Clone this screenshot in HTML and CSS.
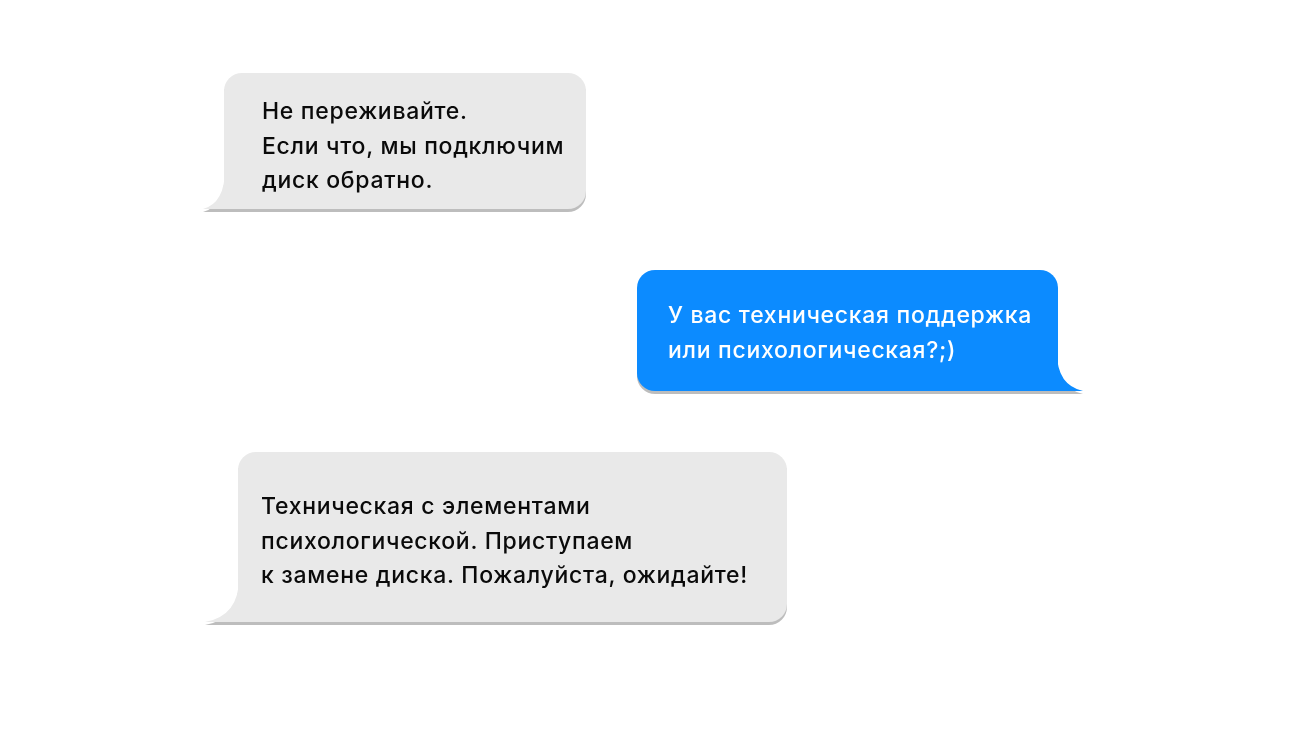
FILE: index.html
```html
<!DOCTYPE html>
<html lang="ru">
<head>
<meta charset="utf-8">
<title>Чат</title>
<link rel="stylesheet" href="styles.css">
</head>
<body>
<main class="chat">
  <div class="bubble in b1">
    <svg class="tail tail-left" viewBox="0 0 22 40" preserveAspectRatio="none"><path d="M22 0 Q22 34 0 40 L22 40 Z"/></svg>
    <p>Не переживайте.<br>Если что, мы подключим<br>диск обратно.</p>
  </div>
  <div class="bubble out b2">
    <svg class="tail tail-right" viewBox="0 0 26 38" preserveAspectRatio="none"><path d="M0 0 Q0 32 26 38 L0 38 Z"/></svg>
    <p>У вас техническая поддержка<br>или психологическая?;)</p>
  </div>
  <div class="bubble in b3">
    <svg class="tail tail-left3" viewBox="0 0 34 44" preserveAspectRatio="none"><path d="M34 0 Q34 38 0 44 L34 44 Z"/></svg>
    <p>Техническая с элементами<br>психологической. Приступаем<br>к замене диска. Пожалуйста, ожидайте!</p>
  </div>
</main>
</body>
</html>
```

FILE: styles.css
```css
html, body {
  margin: 0;
  padding: 0;
  background: #ffffff;
}

body {
  width: 1308px;
  height: 736px;
  overflow: hidden;
  font-family: "Inter", "Liberation Sans", sans-serif;
}

.chat {
  display: flex;
  flex-direction: column;
  align-items: flex-start;
  gap: 61px;
  padding-top: 73px;
}

.bubble {
  position: relative;
  box-sizing: border-box;
  border-radius: 18px;
  filter: drop-shadow(0 3px 0.6px rgba(0, 0, 0, 0.26));
}

.bubble p {
  margin: 0;
  font-size: 23px;
  font-weight: 500;
  line-height: 34.5px;
  letter-spacing: 0.7px;
  white-space: nowrap;
}

.in {
  background: #e9e9e9;
  color: #0a0a0a;
  border-bottom-left-radius: 0;
}

.out {
  background: #0c8bff;
  color: #ffffff;
  border-bottom-right-radius: 0;
}

.in .tail path { fill: #e9e9e9; }
.out .tail path { fill: #0c8bff; }

.tail {
  position: absolute;
  bottom: 0;
  display: block;
}

.tail-left {
  left: -21px;
  width: 22px;
  height: 40px;
}

.tail-right {
  right: -25px;
  width: 26px;
  height: 38px;
}

.tail-left3 {
  left: -33px;
  width: 34px;
  height: 44px;
}

.b1 {
  margin-left: 224px;
  width: 362px;
  height: 136px;
  padding: 21px 0 0 38px;
}

.b2 {
  margin-left: 637px;
  width: 421px;
  height: 121px;
  padding: 28px 0 0 31px;
}

.b3 {
  margin-left: 238px;
  width: 549px;
  height: 170px;
  padding: 37px 0 0 23px;
}
```
